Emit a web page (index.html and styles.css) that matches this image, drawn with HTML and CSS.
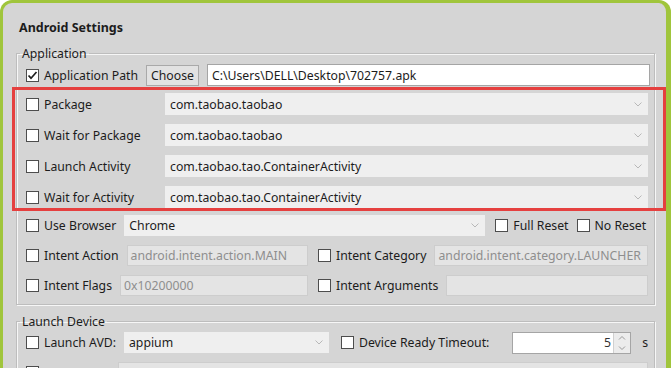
FILE: index.html
```
<!DOCTYPE html>
<html>
<head>
<meta charset="utf-8">
<link rel="stylesheet" href="styles.css">
</head>
<body>
<div class="panel">
  <div class="title">Android Settings</div>

  <fieldset class="group">
    <legend>Application</legend>
    <div class="row">
      <span class="chk on"><svg width="11" height="11" viewBox="0 0 11 11"><path d="M1.5 5.5 L4 8.2 L9.5 2" stroke="#1e1e1e" stroke-width="1.7" fill="none"/></svg></span>
      <span class="lbl">Application Path</span>
      <span class="btn">Choose</span>
      <span class="field white">C:\Users\DELL\Desktop\702757.apk</span>
    </div>

    <div class="highlight">
      <div class="row">
        <span class="chk"></span><span class="lbl fixed">Package</span>
        <span class="combo">com.taobao.taobao<svg class="chev" width="8" height="5" viewBox="0 0 8 5"><path d="M0.5 0.5 L4 4 L7.5 0.5" stroke="#b8b8b8" fill="none"/></svg></span>
      </div>
      <div class="row">
        <span class="chk"></span><span class="lbl fixed">Wait for Package</span>
        <span class="combo">com.taobao.taobao<svg class="chev" width="8" height="5" viewBox="0 0 8 5"><path d="M0.5 0.5 L4 4 L7.5 0.5" stroke="#b8b8b8" fill="none"/></svg></span>
      </div>
      <div class="row">
        <span class="chk"></span><span class="lbl fixed">Launch Activity</span>
        <span class="combo">com.taobao.tao.ContainerActivity<svg class="chev" width="8" height="5" viewBox="0 0 8 5"><path d="M0.5 0.5 L4 4 L7.5 0.5" stroke="#b8b8b8" fill="none"/></svg></span>
      </div>
      <div class="row">
        <span class="chk"></span><span class="lbl fixed">Wait for Activity</span>
        <span class="combo">com.taobao.tao.ContainerActivity<svg class="chev" width="8" height="5" viewBox="0 0 8 5"><path d="M0.5 0.5 L4 4 L7.5 0.5" stroke="#b8b8b8" fill="none"/></svg></span>
      </div>
    </div>

    <div class="rows-after">
      <div class="row inset">
        <span class="chk"></span><span class="lbl">Use Browser</span>
        <span class="combo browser">Chrome<svg class="chev" width="8" height="5" viewBox="0 0 8 5"><path d="M0.5 0.5 L4 4 L7.5 0.5" stroke="#b8b8b8" fill="none"/></svg></span>
        <span class="chk gap-l"></span><span class="lbl">Full Reset</span>
        <span class="chk"></span><span class="lbl last">No Reset</span>
      </div>
      <div class="row inset">
        <div class="half left">
          <span class="chk"></span><span class="lbl">Intent Action</span>
          <span class="field dis">android.intent.action.MAIN</span>
        </div>
        <div class="half right">
          <span class="chk"></span><span class="lbl">Intent Category</span>
          <span class="field dis">android.intent.category.LAUNCHER</span>
        </div>
      </div>
      <div class="row inset">
        <div class="half left">
          <span class="chk"></span><span class="lbl">Intent Flags</span>
          <span class="field dis">0x10200000</span>
        </div>
        <div class="half right">
          <span class="chk"></span><span class="lbl">Intent Arguments</span>
          <span class="field dis"></span>
        </div>
      </div>
    </div>
  </fieldset>

  <fieldset class="group second">
    <legend>Launch Device</legend>
    <div class="rows-after">
      <div class="row inset">
        <span class="chk"></span><span class="lbl">Launch AVD:</span>
        <span class="combo avd">appium<svg class="chev" width="8" height="5" viewBox="0 0 8 5"><path d="M0.5 0.5 L4 4 L7.5 0.5" stroke="#b8b8b8" fill="none"/></svg></span>
        <span class="chk gap-m"></span><span class="lbl">Device Ready Timeout:</span>
        <span class="spin"><span class="num">5</span><span class="arrows">
          <svg width="16" height="10" viewBox="0 0 16 10"><path d="M5 6.5 L8 3.5 L11 6.5" stroke="#9a9a9a" fill="none"/></svg>
          <svg width="16" height="10" viewBox="0 0 16 10"><path d="M5 3.5 L8 6.5 L11 3.5" stroke="#9a9a9a" fill="none"/></svg>
        </span></span>
        <span class="unit">s</span>
      </div>
      <div class="row inset">
        <span class="chk"></span><span class="lbl blank"></span>
        <span class="field dis"></span>
      </div>
    </div>
  </fieldset>
</div>
</body>
</html>
```
FILE: styles.css
```
* { box-sizing: border-box; }
body {
  margin: 0;
  background: #fff;
  font-family: "Noto Sans", "Open Sans", sans-serif;
  font-size: 12.25px;
  color: #1c1c1c;
}
.panel {
  width: 671px;
  height: 368px;
  overflow: hidden;
  background: #d5d5d5;
  border: 3px solid #a0c53c;
  border-right-width: 5px;
  border-bottom: 0;
  border-radius: 12px 12px 0 0;
  padding: 16px 11px 0 13px;
}
.title {
  font-weight: bold;
  font-size: 12.5px;
  line-height: 17px;
  margin-left: 3px;
  margin-bottom: 9px;
}
.group {
  margin: 0;
  min-width: 0;
  border: 1px solid #bdbdbd;
  box-shadow: inset 1px 1px 0 #f6f6f6, 1px 1px 0 #f6f6f6;
  padding: 2px 4px 8px 9px;
}
.group legend {
  padding: 0 2px;
  margin-left: -6px;
  line-height: 17px;
}
.group.second { margin-top: 8px; padding-top: 2px; }
.row {
  display: flex;
  align-items: center;
  height: 22px;
  white-space: nowrap;
}
.row.inset { padding-right: 2px; height: 21px; }
.chk {
  flex: none;
  width: 13px;
  height: 13px;
  border: 1px solid #4d4d4d;
  background: #fff;
  margin-right: 5px;
  display: flex;
  align-items: center;
  justify-content: center;
}
.lbl { flex: none; margin-right: 8px; }
.lbl.fixed { width: 121px; margin-right: 0; }
.lbl.last { margin-right: 0; }
.lbl.blank { width: 66px; }
.btn {
  flex: none;
  height: 21px;
  padding: 0 4px;
  border: 1px solid #a9a9a9;
  background: #e2e2e2;
  display: flex;
  align-items: center;
  margin-right: 8px;
}
.field {
  flex: 1;
  height: 21px;
  display: flex;
  align-items: center;
  padding-left: 4px;
  overflow: hidden;
}
.field.white {
  height: 22px;
  background: #fff;
  border: 1px solid #a5a5a5;
}
.field.dis {
  background: #e4e4e4;
  border: 1px solid #cdcdcd;
  color: #8e8e8e;
  padding-left: 3px;
}
.highlight {
  border: 3px solid #e5403f;
  margin: 1px -16px 0 -14px;
  padding: 3px 15px 0 11px;
  height: 124px;
  display: flex;
  flex-direction: column;
  gap: 9px;
}
.combo {
  flex: 1;
  height: 22px;
  background: #efefef;
  display: flex;
  align-items: center;
  padding-left: 5px;
  padding-right: 6px;
}
.combo .chev { margin-left: auto; }
.combo.browser { flex: none; width: 361px; height: 21px; }
.combo.avd { flex: none; width: 205px; height: 21px; }
.rows-after {
  margin-top: 4px;
  display: flex;
  flex-direction: column;
  gap: 9px;
}
.second .rows-after { margin-top: 0; }
.gap-l { margin-left: 10px; }
.gap-m { margin-left: 12px; }
.half { display: flex; align-items: center; height: 21px; }
.half.left { width: 282px; }
.half.right { flex: 1; margin-left: 10px; }
.spin {
  flex: none;
  margin-left: auto;
  width: 119px;
  height: 22px;
  background: #fff;
  border: 1px solid #a5a5a5;
  display: flex;
}
.spin .num {
  flex: 1;
  text-align: right;
  padding-right: 2px;
  line-height: 20px;
  color: #333;
}
.spin .arrows {
  width: 17px;
  background: #ececec;
  border-left: 1px solid #d0d0d0;
  display: flex;
  flex-direction: column;
}
.spin .arrows svg { display: block; width: 16px; height: 10px; }
.unit { margin-left: 11px; }
```
